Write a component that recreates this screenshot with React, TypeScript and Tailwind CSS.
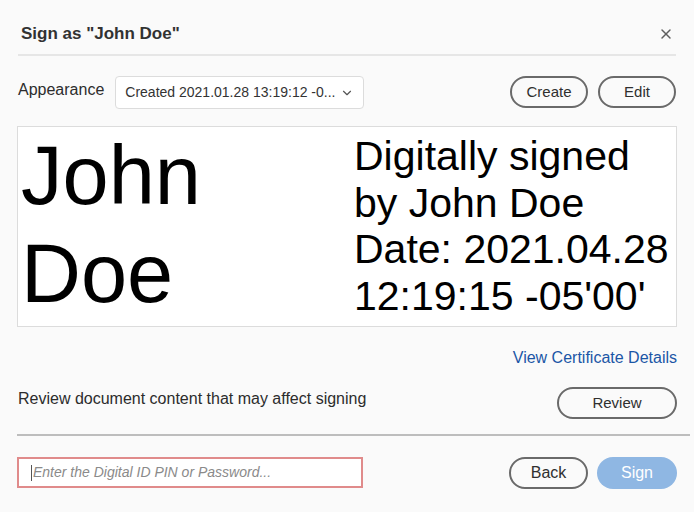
import { X, ChevronDown } from 'lucide-react';

const PillButton = ({ label, className = '' }: { label: string; className?: string }) => (
  <button
    className={`h-[32px] rounded-full border-2 border-[#6a6a6a] bg-transparent text-[15px] text-[#2f2f2f] flex items-center justify-center ${className}`}
  >
    {label}
  </button>
);

const App = () => {
  return (
    <div className="w-[694px] h-[512px] bg-[#fafafa] text-[#2c2c2c] font-['Liberation_Sans',Arial,sans-serif] overflow-hidden">
      <div className="px-[17px]">
        {/* header */}
        <div className="pt-[24px] flex items-center justify-between">
          <h1 className="pl-[4px] text-[17px] leading-[20px] font-bold text-[#323232]">Sign as "John Doe"</h1>
          <button className="mr-[3px] text-[#5f5f5f]" aria-label="Close">
            <X size={16} strokeWidth={2.2} />
          </button>
        </div>
        <div className="mt-[10px] ml-[1px] mr-px h-[2px] bg-[#e6e6e6]" />

        {/* appearance row */}
        <div className="mt-[20px] flex items-start">
          <span className="pl-px pt-[5px] text-[16px] leading-[18px]">Appearance</span>
          <div className="ml-[11px] w-[249px] h-[33px] rounded-[4px] border border-[#dcdcdc] bg-white flex items-center pl-[9px] pr-[9px]">
            <span className="flex-1 text-[14px] text-[#333] whitespace-nowrap">Created 2021.01.28 13:19:12 -0...</span>
            <ChevronDown size={14} strokeWidth={2} className="text-[#555]" />
          </div>
          <div className="ml-auto flex gap-[10px] pr-px">
            <PillButton label="Create" className="w-[78px]" />
            <PillButton label="Edit" className="w-[78px]" />
          </div>
        </div>

        {/* signature preview */}
        <div className="mt-[17px] h-[201px] border border-[#dcdcdc] bg-white flex text-black">
          <div className="w-[336px] pl-[3px] text-[83px] leading-[98px]">
            <div>John</div>
            <div>Doe</div>
          </div>
          <div className="pt-[6px] text-[41px] leading-[46.5px] whitespace-nowrap">
            <div>Digitally signed</div>
            <div>by John Doe</div>
            <div>Date: 2021.04.28</div>
            <div>12:19:15 -05'00'</div>
          </div>
        </div>

        <div className="mt-[22px] flex justify-end">
          <a href="#" className="text-[16px] leading-[18px] text-[#1b56a6]">View Certificate Details</a>
        </div>

        <div className="mt-[23px] flex items-start justify-between">
          <span className="pl-px text-[16px] leading-[18px]">Review document content that may affect signing</span>
          <PillButton label="Review" className="w-[120px] -mt-[3px]" />
        </div>

        <div className="mt-[15px] -mr-[13px] h-[2px] bg-[#bdbdbd]" />

        {/* footer */}
        <div className="mt-[21px] flex items-start">
          <div className="w-[346px] h-[31px] border-2 border-[#e08b8b] bg-white flex items-center pl-[12px]">
            <span className="w-px h-[16px] bg-[#555] mr-px" />
            <span className="text-[14px] italic text-[#8a8a8a]">Enter the Digital ID PIN or Password...</span>
          </div>
          <div className="ml-auto flex gap-[9px]">
            <PillButton label="Back" className="w-[79px] text-[16px]" />
            <button className="w-[80px] h-[32px] rounded-full bg-[#8fb7e3] text-white text-[16px]">Sign</button>
          </div>
        </div>
      </div>
    </div>
  );
};

export default App;
